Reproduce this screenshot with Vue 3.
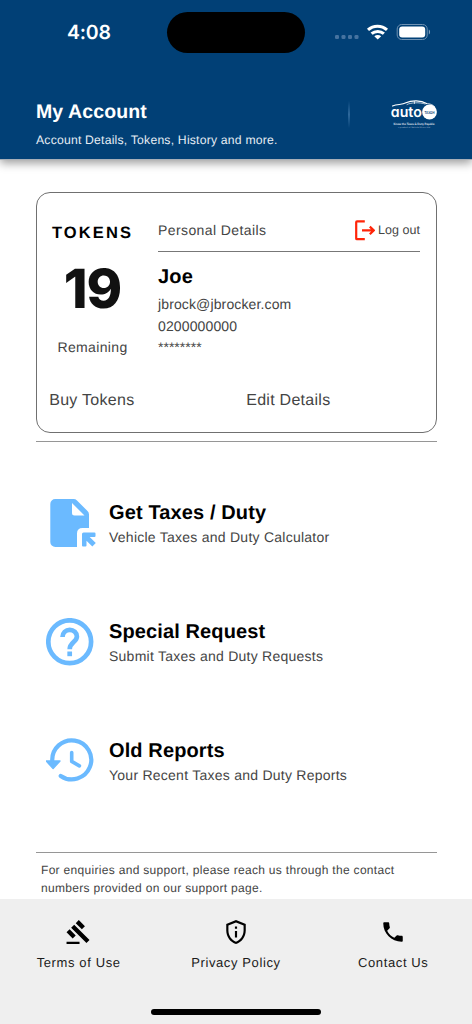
<script setup>
const services = [
  { icon: 'tax', title: 'Get Taxes / Duty', text: 'Vehicle Taxes and Duty Calculator' },
  { icon: 'help', title: 'Special Request', text: 'Submit Taxes and Duty Requests' },
  { icon: 'history', title: 'Old Reports', text: 'Your Recent Taxes and Duty Reports' },
]
const links = [
  { label: 'Terms of Use', path: 'M.5 21h12v2H.5zM4.745 8.07l2.83-2.827 14.14 14.142-2.828 2.828zM11.817 1l5.657 5.656-2.83 2.83-5.654-5.66zM3.325 9.485l5.657 5.657-2.828 2.828-5.657-5.657z' },
  { label: 'Privacy Policy', path: 'M12 1 3 4.6v6C3 16.3 6.8 21.600 12 23c5.200-1.400 9-6.700 9-12.400v-6zm7 9.600c0 4.600-3 8.900-7 10.300-4-1.400-7-5.700-7-10.300V6l7-2.800L19 6zM11 7h2v2h-2zm0 4h2v6h-2z' },
  { label: 'Contact Us', path: 'M6.620 10.790c1.440 2.830 3.760 5.140 6.590 6.590l2.200-2.200c.27-.27.67-.36 1.020-.24 1.120.37 2.330.57 3.570.57.55 0 1 .45 1 1V20c0 .55-.45 1-1 1-9.390 0-17-7.610-17-17 0-.55.45-1 1-1h3.500c.55 0 1 .45 1 1 0 1.250.2 2.450.57 3.570.11.35.03.74-.25 1.020z' },
]
</script>

<template>
  <div class="screen">
    <header class="header">
      <div class="status">
        <span class="time">4:08</span>
        <span class="island"></span>
        <svg class="signals" width="100" height="22" viewBox="0 0 100 22">
          <g fill="#4673a0">
            <rect x="3" y="14" width="4" height="4" rx="1.300" /><rect x="9.500" y="14" width="4" height="4" rx="1.300" />
            <rect x="16" y="14" width="4" height="4" rx="1.300" /><rect x="22.500" y="14" width="4" height="4" rx="1.300" />
          </g>
          <g fill="none" stroke="#fff" stroke-width="3">
            <path d="M36 8.900c5.300-5 13.700-5 19 0" />
            <path d="M39.600 12.700c3.400-3.100 8.900-3.100 12.300 0" />
          </g>
          <path d="M42.300 15.200c1.900-1.700 5-1.700 6.900 0L45.750 18.500z" fill="#fff" />
          <rect x="65.200" y="3.500" width="30" height="15" rx="4.500" fill="none" stroke="#6f92b3" />
          <rect x="67.200" y="5.500" width="26" height="11" rx="3" fill="#fff" />
          <path d="M96.800 8.500c1.700.8 1.700 4.200 0 5z" fill="#7f9ebb" />
        </svg>
      </div>
      <div class="heading">
        <div>
          <h1>My Account</h1>
          <p>Account Details, Tokens, History and more.</p>
        </div>
        <span class="separator"></span>
        <svg class="logo" width="50" height="32" viewBox="0 0 50 32">
          <g fill="none" stroke="#fff" stroke-linecap="round">
            <path d="M2.500 7C8 4.800 11.500 6.200 16 3.800 21.500 1.200 31 1.200 36.500 4.500" stroke-width="1.200" />
            <path d="M17 5.500C20 3.600 30 3 35 5M36.500 4.500c4 .1 7 1.500 8.300 3.300M24.500 2.500v2" stroke-width=".7" />
          </g>
          <text x=".8" y="18.300" class="logo-word" textLength="31" lengthAdjust="spacingAndGlyphs">auto</text>
          <circle cx="39.500" cy="13" r="7.400" fill="#fff" />
          <text x="34.500" y="14.500" class="logo-badge" textLength="10" lengthAdjust="spacingAndGlyphs">TAXGH</text>
          <text x="3.500" y="26" class="logo-tag" textLength="41" lengthAdjust="spacingAndGlyphs">Know the Taxes &amp; Duty Payable</text>
          <text x="8" y="29" class="logo-sub" textLength="32" lengthAdjust="spacingAndGlyphs">a product of Vehicle Ghana Ltd</text>
        </svg>
      </div>
    </header>

    <main class="content">
      <section class="card">
        <div class="card-top">
          <div class="tokens">
            <h2>TOKENS</h2>
            <strong>19</strong>
            <span>Remaining</span>
          </div>
          <div class="details">
            <div class="details-head">
              <span>Personal Details</span>
              <a class="logout">
                <svg width="21" height="21" viewBox="0 0 21 21" fill="none" stroke="#ff2408" stroke-width="2.200">
                  <path d="M10.800 1.400H3a.8.8 0 0 0-.8.8v16.200a.8.8 0 0 0 .8.8h7.800M8 10.400h11.500M15.800 6.600l4 3.800-4 3.800" />
                </svg>
                Log out
              </a>
            </div>
            <h3>Joe</h3>
            <p>jbrock@jbrocker.com</p>
            <p>0200000000</p>
            <p class="mask">********</p>
          </div>
        </div>
        <div class="actions"><a>Buy Tokens</a><a>Edit Details</a></div>
      </section>

      <section class="services">
        <a v-for="s in services" :key="s.icon" class="service">
          <svg width="52" height="50" viewBox="0 0 52 50" fill="#6bbaff">
            <g v-if="s.icon === 'tax'">
              <path fill-rule="evenodd" d="M9.300 0H27.500a5 5 0 0 1 3.500 1.400L41.500 12a5 5 0 0 1 1.500 3.500V29H36.500Q31 29 31 34.500V48H9.300a5 5 0 0 1-5-5V5a5 5 0 0 1 5-5zM26 4v10a2.500 2.500 0 0 0 2.500 2.500H38.500z" />
              <path d="M37.500 33.500H48.500a1 1 0 0 1 1 1V37a1 1 0 0 1-1 1H43.700L49.800 44.100 46.300 47.600 40.500 41.800V46.500a1 1 0 0 1-1 1H37a1 1 0 0 1-1-1V35a1.500 1.500 0 0 1 1.500-1.500z" />
            </g>
            <g v-else-if="s.icon === 'help'" fill="none" stroke="#6bbaff" stroke-width="4.700">
              <circle cx="23.700" cy="23.700" r="21.400" />
              <path d="M16.500 19c0-4.200 3.200-7.200 7.200-7.200s7.200 3 7.200 6.700c0 5.500-7.200 5.800-7.200 12.800" />
              <path d="M23.700 33.500v4.700" />
            </g>
            <g v-else transform="translate(0 .6)">
              <g fill="none" stroke="#6bbaff" stroke-width="4.200" stroke-linecap="round" stroke-linejoin="round">
                <path d="M6.300 23.500A19.500 19.500 0 1 1 14.700 38.300" />
                <path d="M25.700 15v8.800l7.700 4.500" stroke-width="3.600" />
              </g>
              <path d="M.2 23.400H14L7.100 31z" stroke="#6bbaff" stroke-width="1.400" stroke-linejoin="round" />
            </g>
          </svg>
          <div>
            <h3>{{ s.title }}</h3>
            <p>{{ s.text }}</p>
          </div>
        </a>
      </section>

      <p class="note">For enquiries and support, please reach us through the contact numbers provided on our support page.</p>
    </main>

    <footer class="footer">
      <nav>
        <a v-for="l in links" :key="l.label">
          <svg width="26" height="26" viewBox="0 0 24 24"><path :d="l.path" /></svg>
          <span>{{ l.label }}</span>
        </a>
      </nav>
      <span class="home-bar"></span>
    </footer>
  </div>
</template>

<style>
html, body { margin: 0; background: #fff; }
</style>

<style scoped>
* { box-sizing: border-box; }
h1, h2, h3, p { margin: 0; }
.screen {
  width: 472px; height: 1024px; overflow: hidden;
  display: flex; flex-direction: column;
  font-family: "Liberation Sans", Arial, sans-serif; color: #444; background: #fff;
  text-rendering: geometricPrecision;
}
.header { height: 160px; flex: none; background: #014076; border-bottom: 1px solid #a7afb8; box-shadow: 0 3px 9px rgba(0, 0, 0, .4); color: #fff; }
.status { height: 99px; padding-top: 12px; display: grid; grid-template-columns: 167px 138px 1fr; align-items: start; }
.time { padding: 8px 0 0 67px; font: 600 19.500px/24px Inter, sans-serif; letter-spacing: -.2px; }
.island { height: 41px; border-radius: 21px; background: #000; }
.signals { margin: 9px 0 0 27px; }
.heading { display: grid; grid-template-columns: 312px 42px 1fr; padding-left: 36px; }
.heading h1 { font-size: 19.500px; line-height: 24px; letter-spacing: .1px; margin-top: 1px; }
.heading p { margin-top: 7px; font-size: 12.200px; line-height: 18px; letter-spacing: .21px; color: #e6edf4; white-space: nowrap; }
.separator { width: 2px; height: 27px; margin-top: 2px; background: linear-gradient(#014076, #2e689b, #014076); }
.logo-word { font: 600 14.500px Inter, sans-serif; font-feature-settings: "cv11"; fill: #fff; }
.logo-badge { font: 700 4px Lato, sans-serif; fill: #014076; }
.logo-tag { font: 700 3px Lato, sans-serif; fill: #e2eaf2; }
.logo-sub { font: 2.200px Lato, sans-serif; fill: #9db5cc; }

.content { flex: 1; padding: 32px 35.500px 0; }
.card { height: 241px; border: 1px solid #707070; border-radius: 14px; display: flex; flex-direction: column; }
.card-top { height: 198px; display: flex; }
.tokens { width: 112px; padding-top: 30px; display: flex; flex-direction: column; align-items: center; flex: none; }
.tokens h2 { font-size: 16.500px; line-height: 20px; letter-spacing: 2.100px; color: #000; }
.tokens strong { margin: 19px 0; font: 800 54px/56px Inter, sans-serif; letter-spacing: -1px; color: #111; }
.tokens span { font-size: 14px; line-height: 20px; letter-spacing: .36px; }
.details { width: 262px; margin-left: 9.500px; padding-top: 27px; }
.details-head { height: 32px; display: flex; justify-content: space-between; border-bottom: 1px solid #777; font-size: 14px; line-height: 20px; letter-spacing: .4px; }
.logout { display: flex; gap: 3px; font-size: 12.500px; letter-spacing: .05px; white-space: nowrap; }
.details h3 { margin: 13px 0 4px; font-size: 20px; line-height: 24px; letter-spacing: .2px; color: #000; }
.details p { font-size: 14px; line-height: 22px; letter-spacing: .13px; }
.details .mask { margin-top: -1px; letter-spacing: 0; }
.actions { display: grid; grid-template-columns: 197px 1fr; padding-left: 12.700px; font-size: 16px; line-height: 20px; letter-spacing: .28px; }
.services { margin-top: 8px; height: 412px; padding: 57px 0 0 10.500px; border: solid #969696; border-width: 1.500px 0; display: flex; flex-direction: column; gap: 68.800px; }
.service { display: flex; gap: 11px; height: 50px; }
.service h3 { font-size: 20px; line-height: 24px; letter-spacing: .12px; color: #000; margin-top: 2px; }
.service p { margin-top: 2px; font-size: 14px; line-height: 20px; letter-spacing: .25px; }
.note { padding: 8px 30px 0 5.500px; font-size: 12px; line-height: 18px; letter-spacing: .31px; }

.footer { height: 125px; flex: none; position: relative; background: #efefef; color: #1b1b1b; }
.footer nav { display: grid; grid-template-columns: repeat(3, 157.300px); padding-top: 20px; }
.footer a { display: flex; flex-direction: column; align-items: center; }
.footer a span { margin-top: 9px; font-size: 13px; line-height: 18px; letter-spacing: .62px; }
.footer svg { fill: #000; overflow: visible; }
.home-bar { position: absolute; left: 151px; bottom: 9px; width: 170px; height: 6px; border-radius: 3px; background: #000; }
</style>
